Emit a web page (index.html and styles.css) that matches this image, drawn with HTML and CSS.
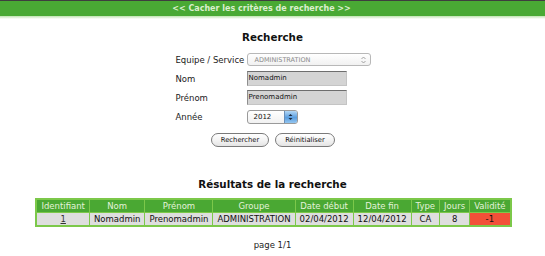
FILE: index.html
```html
<!DOCTYPE html>
<html lang="fr">
<head>
<meta charset="utf-8">
<title>Recherche</title>
<link rel="stylesheet" href="styles.css">
</head>
<body>
<div class="topline"></div>
<div class="togglebar"><a class="togglelink">&lt;&lt; Cacher les critères de recherche &gt;&gt;</a></div>
<div class="togglefade"></div>

<h2 class="title">Recherche</h2>

<div class="form">
  <div class="label">Equipe / Service</div>
  <div class="field">
    <div class="select wide"><span class="seltext">ADMINISTRATION</span>
      <svg class="updown" width="5" height="8" viewBox="0 0 5 8"><path d="M0.5 3 L2.5 1 L4.5 3 M0.5 5 L2.5 7 L4.5 5" fill="none" stroke="#999" stroke-width="0.9"/></svg>
    </div>
  </div>
  <div class="label">Nom</div>
  <div class="field"><div class="input">Nomadmin</div></div>
  <div class="label">Prénom</div>
  <div class="field"><div class="input">Prenomadmin</div></div>
  <div class="label">Année</div>
  <div class="field">
    <div class="select year"><span class="yeartext">2012</span>
      <span class="bluebox"><svg width="5" height="8" viewBox="0 0 5 8"><path d="M0.5 3 L2.5 1 L4.5 3 Z M0.5 5 L2.5 7 L4.5 5 Z" fill="#1a2a40"/></svg></span>
    </div>
  </div>
</div>

<div class="buttons">
  <button class="btn b1">Rechercher</button>
  <button class="btn b2">Réinitialiser</button>
</div>

<h2 class="title results">Résultats de la recherche</h2>

<table class="grid">
  <thead>
    <tr><th>Identifiant</th><th>Nom</th><th>Prénom</th><th>Groupe</th><th>Date début</th><th>Date fin</th><th>Type</th><th>Jours</th><th>Validité</th></tr>
  </thead>
  <tbody>
    <tr><td><a class="idlink">1</a></td><td>Nomadmin</td><td>Prenomadmin</td><td>ADMINISTRATION</td><td>02/04/2012</td><td>12/04/2012</td><td>CA</td><td>8</td><td class="bad">-1</td></tr>
  </tbody>
</table>

<div class="pager">page 1/1</div>
</body>
</html>
```

FILE: styles.css
```css
html, body {
  margin: 0;
  padding: 0;
  background: #ffffff;
  font-family: "DejaVu Sans", Verdana, sans-serif;
  font-size: 8.5px;
  color: #1a1a1a;
}
.topline {
  height: 1px;
  background: #3e3e3e;
}
.togglebar {
  height: 15px;
  background: #49a934;
  display: flex;
  align-items: center;
  justify-content: center;
  padding-right: 22px;
}
.togglelink {
  font-weight: bold;
  font-size: 8px;
  color: #dcefd0;
}
.togglefade {
  height: 3px;
  background: linear-gradient(#bfe3b0, #ffffff);
}
.title {
  margin: 12px 0 0 0;
  text-align: center;
  font-size: 10.3px;
  font-weight: bold;
  color: #111;
  line-height: 13px;
}
.form {
  width: 196px;
  margin: 6px auto 0 auto;
  display: grid;
  grid-template-columns: 72px 124px;
  grid-auto-rows: 19px;
  align-items: center;
}
.label {
  color: #222;
  padding-left: 1px;
}
.field {
  display: flex;
  align-items: center;
}
.select {
  box-sizing: border-box;
  height: 13px;
  border: 1px solid #b8b8b8;
  border-radius: 3px;
  background: linear-gradient(#ffffff, #f1f1f1);
  display: flex;
  align-items: center;
}
.select.wide {
  width: 124px;
  padding-left: 7px;
}
.seltext {
  font-size: 6.5px;
  color: #8a8a8a;
  flex: 1;
}
.updown {
  margin-right: 4px;
}
.input {
  box-sizing: border-box;
  width: 100px;
  height: 15px;
  background: #d4d4d4;
  border-top: 1px solid #6e6e6e;
  border-left: 1px solid #8e8e8e;
  border-right: 1px solid #c4c4c4;
  border-bottom: 1px solid #c4c4c4;
  font-size: 7px;
  color: #111;
  line-height: 13px;
  padding-left: 1px;
}
.select.year {
  width: 51px;
  height: 14px;
  border-color: #9a9a9a;
  overflow: hidden;
}
.yeartext {
  font-size: 7px;
  color: #111;
  flex: 1;
  padding-left: 6px;
}
.bluebox {
  width: 12px;
  height: 12px;
  background: linear-gradient(#b4d8f6, #5a9ee0 55%, #94c6f0);
  border-left: 1px solid #6a8fb8;
  display: flex;
  align-items: center;
  justify-content: center;
}
.buttons {
  margin-top: 7px;
  display: flex;
  justify-content: center;
  gap: 6px;
  padding-left: 1px;
}
.btn {
  box-sizing: border-box;
  height: 14px;
  border: 1px solid #7a7a7a;
  border-radius: 7px;
  background: linear-gradient(#ffffff, #f4f4f4 50%, #e4e4e4);
  font-family: "DejaVu Sans", Verdana, sans-serif;
  font-size: 6.8px;
  color: #111;
  padding: 0;
  line-height: 12px;
}
.b1 { width: 58px; }
.b2 { width: 60px; }
.results {
  margin-top: 31px;
}
.grid {
  margin: 7px auto 0 auto;
  border-collapse: separate;
  border-spacing: 1px;
  background: #7cc84a;
  border: 1px solid #7cc84a;
  position: relative;
  left: 1px;
}
.grid th, .grid td {
  font-size: 8.5px;
  line-height: 12px;
  padding: 0 4px;
  text-align: center;
  white-space: nowrap;
}
.grid th {
  background: #4aa833;
  color: #e4f2da;
  font-weight: normal;
}
.grid td {
  background: #dedede;
  color: #111;
}
.grid td.bad {
  background: #f25038;
}
.idlink {
  color: #333;
  text-decoration: underline;
}
.pager {
  margin-top: 13px;
  text-align: center;
  color: #222;
}
```
